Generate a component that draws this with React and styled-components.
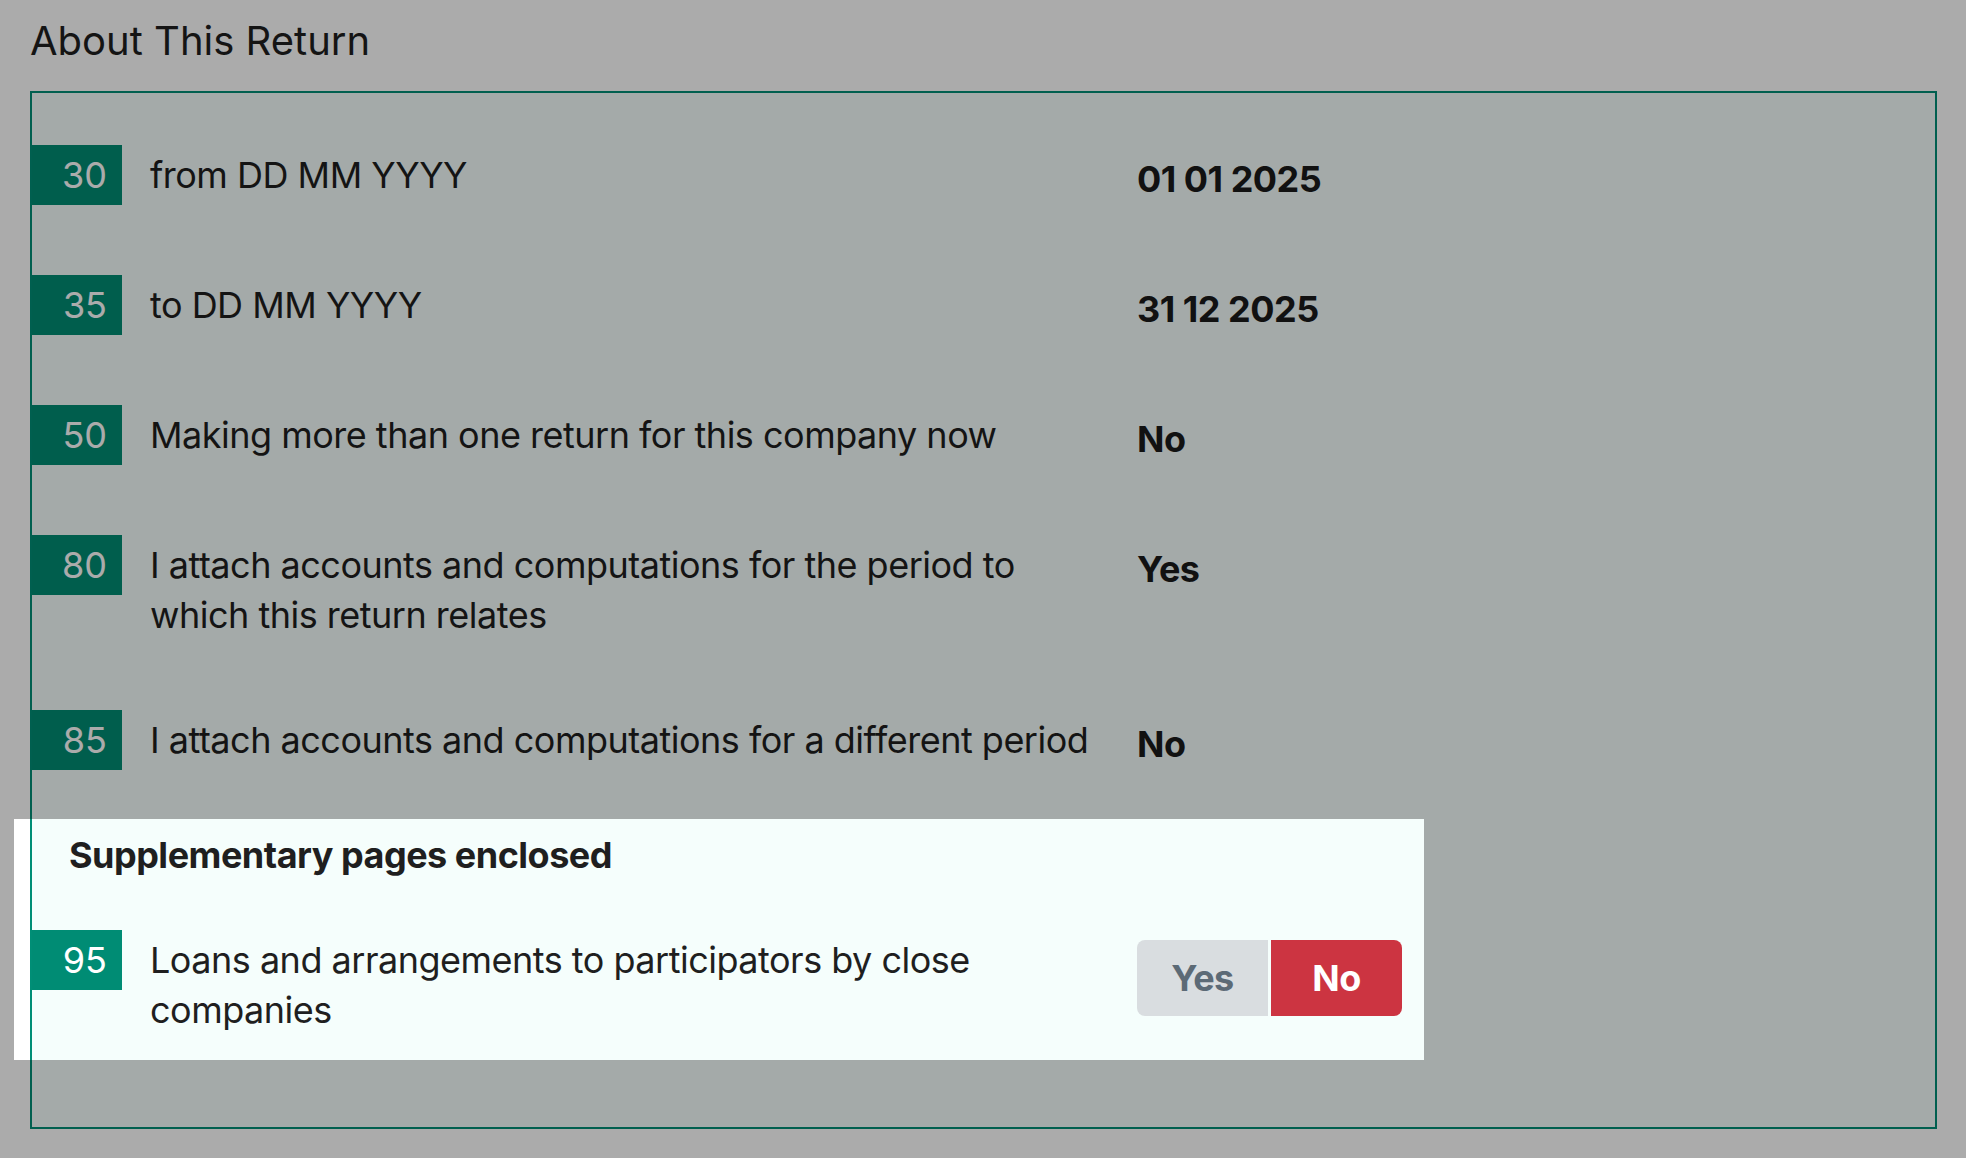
import React from "react";
import styled, { createGlobalStyle } from "styled-components";

const GlobalStyle = createGlobalStyle`
  html, body {
    margin: 0;
    padding: 0;
    background: #ffffff;
  }
  body {
    font-family: Inter, "Noto Sans", sans-serif;
    color: #1f1f1f;
  }
  * { box-sizing: border-box; }
`;

const Page = styled.div`
  padding: 17px 29px 40px 30px;
`;

const Title = styled.h1`
  margin: 0 0 26px;
  font-size: 40px;
  line-height: 48px;
  font-weight: 400;
  color: #1f1f1f;
`;

const Panel = styled.section`
  border: 2px solid #008e76;
  background: #f5fefc;
  padding: 52px 0 85px;
`;

const RowList = styled.div`
  display: flex;
  flex-direction: column;
  gap: 70px;
`;

const Row = styled.div`
  display: grid;
  grid-template-columns: 90px 1fr 269px;
  column-gap: 20px;
  align-items: start;
  width: 1374px;
`;

const Badge = styled.div`
  height: 60px;
  line-height: 60px;
  background: #008c74;
  color: #ffffff;
  font-size: 36px;
  text-align: right;
  padding-right: 15px;
`;

const Label = styled.div`
  padding: 5px 0 0 8px;
  font-size: 36px;
  line-height: 50px;
  letter-spacing: -0.5px;
  color: #1f1f1f;
`;

const Value = styled.div`
  padding-top: 9px;
  font-size: 36px;
  line-height: 50px;
  font-weight: 700;
  letter-spacing: -0.5px;
  color: #1a1a1a;
`;

const Highlight = styled.div`
  position: relative;
  margin-top: 67px;
  padding-bottom: 7px;
  width: 1374px;
`;

const Spotlight = styled.div`
  position: absolute;
  inset: -18px;
  box-shadow: 0 0 0 4000px rgba(0, 0, 0, 0.33);
  pointer-events: none;
  z-index: 2;
`;

const SectionHeading = styled.h2`
  margin: 0 0 57px;
  padding-left: 37px;
  font-size: 36px;
  line-height: 36px;
  font-weight: 700;
  letter-spacing: -0.5px;
  color: #1f1f1f;
`;

const Toggle = styled.div`
  margin-top: 10px;
  display: flex;
  gap: 3px;
  width: 265px;
`;

const ToggleButton = styled.button`
  flex: 1;
  height: 76px;
  border: none;
  font-family: Inter, "Noto Sans", sans-serif;
  font-size: 36px;
  font-weight: 700;
  letter-spacing: -0.5px;
  cursor: pointer;
  background: ${(p) => (p.$active ? "#cc3441" : "#d9dde0")};
  color: ${(p) => (p.$active ? "#ffffff" : "#5c6a76")};
  border-radius: ${(p) => (p.$side === "left" ? "8px 0 0 8px" : "0 8px 8px 0")};
`;

const rows = [
  { code: "30", label: "from DD MM YYYY", value: "01 01 2025" },
  { code: "35", label: "to DD MM YYYY", value: "31 12 2025" },
  { code: "50", label: "Making more than one return for this company now", value: "No" },
  {
    code: "80",
    label: "I attach accounts and computations for the period to which this return relates",
    value: "Yes",
  },
  { code: "85", label: "I attach accounts and computations for a different period", value: "No" },
];

export default function App() {
  return (
    <>
      <GlobalStyle />
      <Page>
        <Title>About This Return</Title>
        <Panel>
          <RowList>
            {rows.map((r) => (
              <Row key={r.code}>
                <Badge>{r.code}</Badge>
                <Label>{r.label}</Label>
                <Value>{r.value}</Value>
              </Row>
            ))}
          </RowList>
          <Highlight>
            <Spotlight />
            <SectionHeading>Supplementary pages enclosed</SectionHeading>
            <Row>
              <Badge>95</Badge>
              <Label>Loans and arrangements to participators by close companies</Label>
              <Toggle>
                <ToggleButton $side="left">Yes</ToggleButton>
                <ToggleButton $side="right" $active>
                  No
                </ToggleButton>
              </Toggle>
            </Row>
          </Highlight>
        </Panel>
      </Page>
    </>
  );
}
